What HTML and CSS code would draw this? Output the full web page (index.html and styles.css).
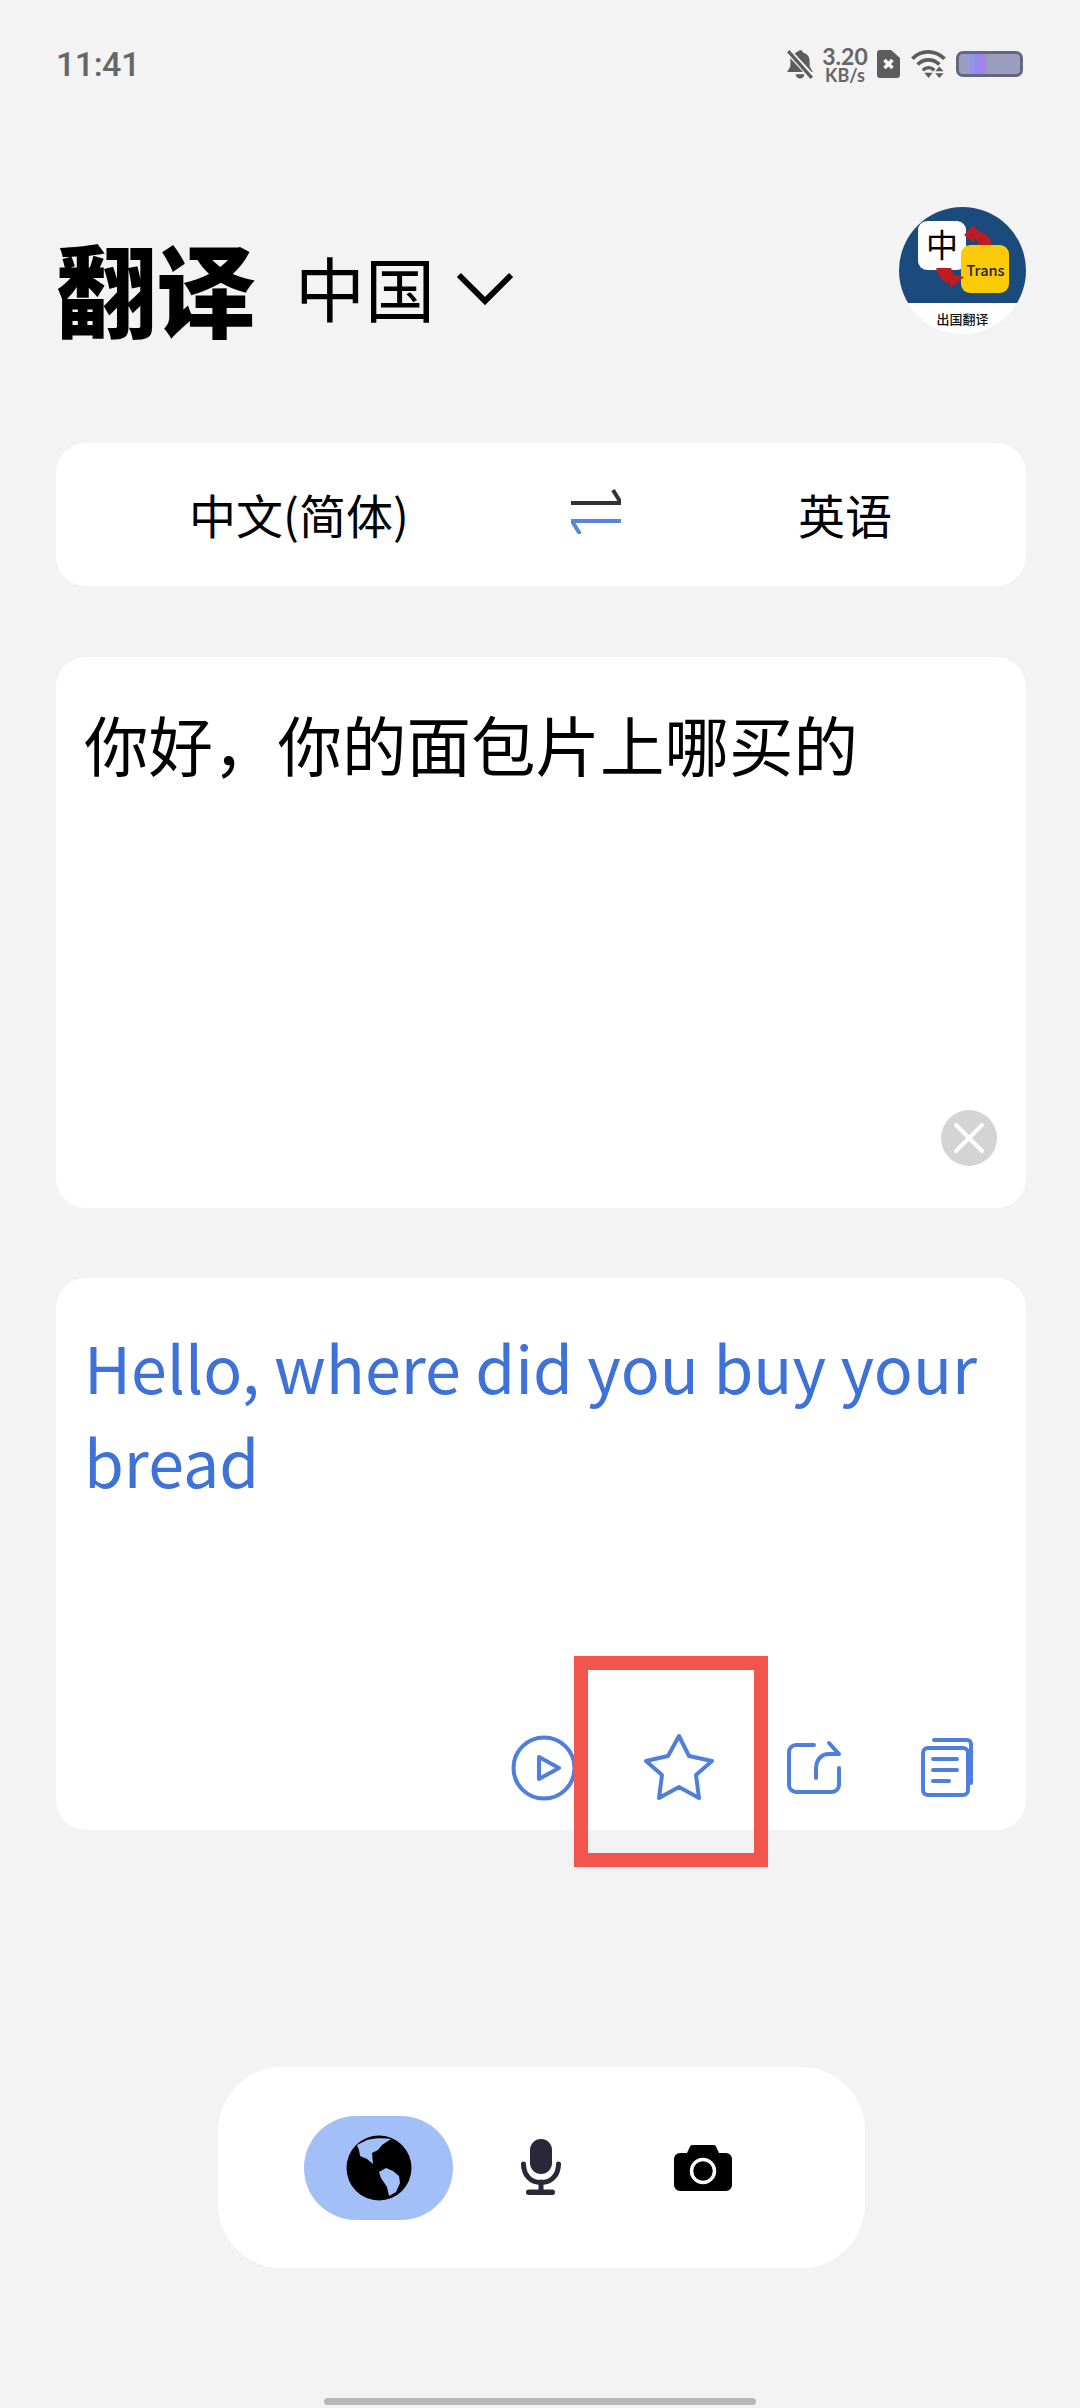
FILE: index.html
```html
<!DOCTYPE html>
<html lang="zh-CN">
<head>
<meta charset="utf-8">
<title>翻译</title>
<link rel="stylesheet" href="styles.css">
</head>
<body>
<div class="page">
  <header class="status">
    <span class="time">11:41</span>
    <div class="status-icons">
      <svg class="ic-bell" viewBox="0 0 26 28">
        <path class="st-fill" d="M13 1a3 3 0 0 1 3 2.400c4 1 6 4 6 8v5l3 5H1l3-5v-7c0-1 .3-2 .7-3zM9 23.500h8a4 4 0 0 1-8 0z"/>
        <path class="st-cut" d="M1 1l24 26"/>
        <path class="st-line" d="M2 2l22 25"/>
      </svg>
      <div class="speed"><span class="speed-num">3.20</span><span class="speed-unit">KB/s</span></div>
      <svg class="ic-sim" viewBox="0 0 23 28">
        <path class="st-fill" d="M3 0h11l9 8v17a3 3 0 0 1-3 3H3a3 3 0 0 1-3-3V3a3 3 0 0 1 3-3z"/>
        <path class="st-x" d="M7.500 10l8 8M15.500 10l-8 8"/>
      </svg>
      <svg class="ic-wifi" viewBox="0 0 34 27">
        <path class="st-arc" d="M1 8.500C9-.5 23-.5 32 8.500M6 14c6-6 15-6 21 0M11 19.500c3.500-3.200 8-3.200 11 0"/>
        <path class="st-fill" d="M12.500 22h8l-4 5zM27 16l4 4.500h-8zM23 22.500h8l-4 4.500z"/>
      </svg>
      <div class="battery"><span class="battery-glow"></span></div>
    </div>
  </header>

  <section class="title-row">
    <div class="title-group">
      <h1 class="title">翻译</h1>
      <span class="region">中国</span>
      <svg class="chevron" viewBox="0 0 60 34"><path d="M3 3l27 27L57 3"/></svg>
    </div>
    <svg class="avatar" viewBox="0 0 127 127">
      <defs><clipPath id="avatar-round"><circle cx="63.500" cy="63.500" r="63.500"/></clipPath></defs>
      <g clip-path="url(#avatar-round)">
        <rect class="av-white" width="127" height="127"/>
        <rect class="av-blue" width="127" height="96"/>
      </g>
      <rect class="av-white" x="19" y="14" width="48" height="49" rx="9"/>
      <text class="av-zh" x="43" y="50" text-anchor="middle">中</text>
      <path class="av-red" d="M65 28l10-10 4 6q11 2 14 14H80q-2-6-6-7l2 6z"/>
      <rect class="av-yellow" x="62" y="38" width="48" height="48" rx="9"/>
      <path class="av-red" d="M37 61h15l3 7 10 2-13 11-2-5q-9-1-13-15z"/>
      <text class="av-en" x="86.500" y="69" text-anchor="middle">Trans</text>
      <text class="av-cap" x="63.500" y="117" text-anchor="middle">出国翻译</text>
    </svg>
  </section>

  <section class="card lang-card">
    <span class="lang">中文(简体)</span>
    <svg class="swap" viewBox="0 0 50 46">
      <path class="swap-top" d="M0 15h50l-8-13"/>
      <path class="swap-bottom" d="M50 33H1l8 13"/>
    </svg>
    <span class="lang lang-to">英语</span>
  </section>

  <section class="card source-card">
    <p class="source-text">你好，你的面包片上哪买的</p>
    <button class="clear" type="button">
      <svg viewBox="0 0 56 56">
        <path class="clear-x" d="M15 15l26 26M41 15L15 41"/>
      </svg>
    </button>
  </section>

  <section class="card result-card">
    <p class="result-text">Hello, where did you buy your bread</p>
    <div class="actions">
      <svg class="action action-play" viewBox="0 0 80 80">
        <circle cx="40" cy="40" r="30.500"/>
        <path d="M35 29v22l20-11z"/>
      </svg>
      <svg class="action" viewBox="0 0 80 80">
        <path d="M40 8l10 20 23 5-16 14 3 23-20-11-20 11 3-23L7 33l22-5z"/>
      </svg>
      <svg class="action" viewBox="0 0 80 80">
        <path d="M40 17H22a7 7 0 0 0-7 7v33a7 7 0 0 0 7 7h36a7 7 0 0 0 7-7V40"/>
        <path d="M42 50V41c0-9 5-15 13-15h10M55 15l10 11"/>
      </svg>
      <svg class="action" viewBox="0 0 80 80">
        <rect x="14" y="20" width="45" height="47" rx="5"/>
        <path d="M25 12h33a4 4 0 0 1 4 4v39M24 31h24M24 42h24M24 53h16"/>
      </svg>
    </div>
  </section>

  <nav class="dock">
    <div class="dock-item dock-active">
      <svg class="ic-globe" viewBox="0 0 66 66">
        <circle class="globe-ball" cx="33" cy="33" r="32.500"/>
        <path class="globe-land" d="M11 10l10-5c8-2 17-2 24-1l-9 6-4 5-6 3 1 11-6-5-7-3-1-6z"/>
        <path class="globe-land" d="M40 33l7 3 6 5 1 7-4 9-7 4-2-9-6-9-2-6z"/>
      </svg>
    </div>
    <div class="dock-item">
      <svg class="ic-mic" viewBox="0 0 40 56">
        <rect class="mic-fill" x="9" y="0" width="22" height="35" rx="11"/>
        <path class="mic-arc" d="M2.500 25c0 11 7 18.500 17.500 18.500S37.500 36 37.500 25M20 43v8"/>
        <rect class="mic-fill" x="5" y="50.500" width="29" height="5.500" rx="2.700"/>
      </svg>
    </div>
    <div class="dock-item">
      <svg class="ic-camera" viewBox="0 0 58 46">
        <path d="M6 8h7l3-6.500A2.500 2.500 0 0 1 18 0h22a2.500 2.500 0 0 1 2 1.500L45 8h7a6 6 0 0 1 6 6v26a6 6 0 0 1-6 6H6a6 6 0 0 1-6-6V14a6 6 0 0 1 6-6z"/>
        <circle class="cam-lens" cx="29" cy="26" r="11.500"/>
      </svg>
    </div>
  </nav>

  <div class="home-bar"></div>

  <div class="focus-box"></div>
</div>
</body>
</html>
```
FILE: styles.css
```css
* { box-sizing: border-box; margin: 0; padding: 0; }

html, body { width: 1080px; height: 2408px; overflow: hidden; }

body {
  background: #f3f3f4;
  font-family: "Noto Sans CJK SC", "Noto Sans", sans-serif;
  color: #000;
}

.page {
  position: relative;
  width: 1080px;
  height: 2408px;
  padding: 44px 54px 0 56px;
  display: flex;
  flex-direction: column;
}

/* status bar */
.status {
  height: 40px;
  display: flex;
  align-items: center;
  justify-content: space-between;
}

.time {
  font: 500 34px/40px Roboto, sans-serif;
  color: #666;
  letter-spacing: -0.5px;
}

.status-icons {
  display: flex;
  align-items: center;
  margin-right: 3px;
}

.ic-bell { width: 28px; height: 30px; margin-right: 8px; }
.ic-sim { width: 23px; height: 28px; margin: 0 11px 0 9px; }
.ic-wifi { width: 36px; height: 28px; margin-right: 9px; }

.st-fill { fill: #5c5c5c; }
.st-line { stroke: #5c5c5c; stroke-width: 3; fill: none; }
.st-cut { stroke: #f3f3f4; stroke-width: 6; fill: none; }
.st-x { stroke: #fff; stroke-width: 3.500; fill: none; }
.st-arc { stroke: #5c5c5c; stroke-width: 3.500; fill: none; }

.speed {
  display: flex;
  flex-direction: column;
  align-items: center;
  width: 46px;
  color: #666;
  font-family: Lato, Roboto, sans-serif;
}
.speed-num { font-size: 23px; line-height: 21px; font-weight: 700; }
.speed-unit { font-size: 18px; line-height: 16px; font-weight: 700; }

.battery {
  width: 67px;
  height: 26px;
  border: 3px solid #62667f;
  border-radius: 7px;
  background: #9a9dbd;
  overflow: hidden;
  display: flex;
}
.battery-glow {
  width: 20px;
  margin-left: 9px;
  background: linear-gradient(90deg, #9a9dd6, #8d8cf0 40%, #a67fe8 75%, #9a9dbd);
}

/* title and app badge */
.title-row {
  margin-top: 123px;
  height: 236px;
  display: flex;
  justify-content: space-between;
  align-items: flex-start;
}

.title-group {
  display: flex;
  align-items: center;
  margin-top: 30px;
}

.title {
  font-size: 100px;
  line-height: 100px;
  font-weight: 900;
}

.region {
  font-size: 70px;
  line-height: 100px;
  font-weight: 400;
  margin-left: 39px;
}

.chevron {
  width: 58px;
  height: 33px;
  margin: 0 0 -2px 21px;
  fill: none;
  stroke: #000;
  stroke-width: 6;
}

.avatar { width: 127px; height: 127px; }
.av-white { fill: #fff; }
.av-blue { fill: #1b4a7c; }
.av-yellow { fill: #fbcb0a; }
.av-red { fill: #bf1c22; }
.av-zh { font-size: 32px; fill: #000; }
.av-en { font-size: 14.500px; font-weight: 500; fill: #222; }
.av-cap { font-size: 13px; font-weight: 500; fill: #111; }

/* cards */
.card {
  background: #fff;
  border-radius: 30px;
  width: 970px;
}

.lang-card {
  height: 143px;
  display: grid;
  grid-template-columns: 382px 50px 1fr;
  align-items: center;
  justify-items: start;
  padding: 0 0 2px 133px;
}

.lang { font-size: 47px; line-height: 60px; font-weight: 400; }
.lang-to { margin-left: 177px; }

.swap { width: 50px; height: 46px; margin-top: -6px; fill: none; stroke-width: 4; }
.swap-top { stroke: #333; }
.swap-bottom { stroke: #5585dd; }

.source-card {
  margin-top: 71px;
  height: 551px;
  padding: 39px 29px 42px 28px;
  display: flex;
  flex-direction: column;
}

.source-text { font-size: 64.500px; line-height: 94px; }

.clear {
  margin-top: auto;
  width: 56px;
  height: 56px;
  border: none;
  border-radius: 50%;
  background: #d4d4d4;
  align-self: flex-end;
}
.clear svg { display: block; width: 56px; height: 56px; }
.clear-x { stroke: #fff; stroke-width: 4; fill: none; stroke-linecap: round; }

.result-card {
  margin-top: 70px;
  height: 552px;
  padding: 41px 10px 0 28px;
  display: flex;
  flex-direction: column;
}

.result-text {
  font-size: 64.500px;
  line-height: 94px;
  color: #3f72d8;
  padding-right: 17px;
}

.actions {
  margin-top: auto;
  margin-bottom: 22px;
  display: flex;
  justify-content: flex-end;
}

.action {
  width: 80px;
  height: 80px;
  margin: 0 27.500px;
  fill: none;
  stroke: #4f7fdc;
  stroke-width: 4;
  stroke-linecap: round;
  stroke-linejoin: round;
}

.action-play { margin-right: 27.500px; }

/* bottom dock */
.dock {
  margin: 237px 0 0 162px;
  width: 647px;
  height: 201px;
  background: #fff;
  border-radius: 64px;
  display: flex;
  align-items: flex-start;
  padding: 49px 0 0 86px;
}

.dock-item {
  width: 149px;
  height: 104px;
  border-radius: 52px;
  display: flex;
  align-items: center;
  justify-content: center;
}

.dock-active { background: #a3bff8; }
.dock-item + .dock-item { margin-left: 14px; }

.ic-globe { width: 66px; height: 66px; }
.globe-ball { fill: #000; }
.globe-land { fill: #a3bff8; }

.ic-mic { width: 40px; height: 56px; margin: -2px 2px 0 0; }
.mic-fill { fill: #2a2838; }
.mic-arc { fill: none; stroke: #2a2838; stroke-width: 5; stroke-linecap: round; }

.ic-camera { width: 58px; height: 46px; margin-right: 3px; }
.ic-camera path { fill: #000; }
.cam-lens { fill: none; stroke: #fff; stroke-width: 3.500; }

.home-bar {
  margin: 130px 0 0 268px;
  width: 432px;
  height: 7px;
  border-radius: 4px;
  background: #b7b7b7;
}

/* red frame drawn over the favourite action */
.focus-box {
  position: absolute;
  left: 574px;
  top: 1656px;
  width: 194px;
  height: 211px;
  border: 14px solid #f2544e;
}
```
